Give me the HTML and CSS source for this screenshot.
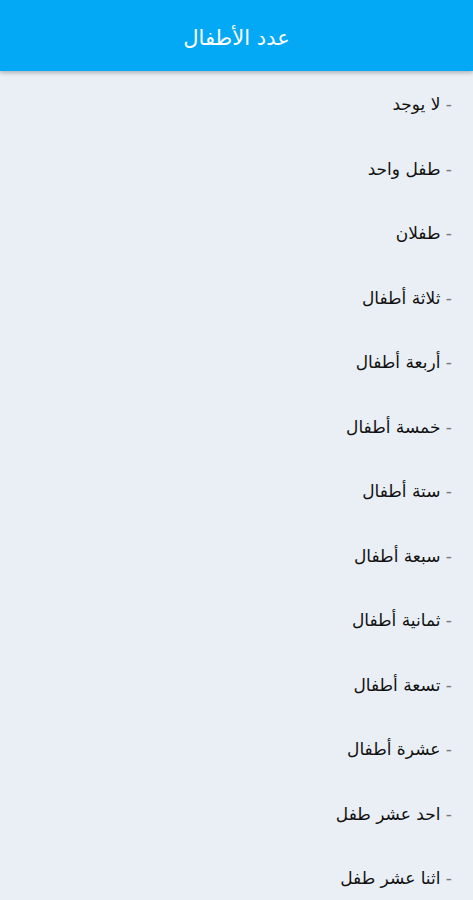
FILE: index.html
```html
<!DOCTYPE html>
<html lang="ar" dir="rtl">
<head>
<meta charset="utf-8">
<link rel="stylesheet" href="styles.css">
</head>
<body>
<header class="appbar"><h1 class="title">عدد الأطفال</h1></header>
<ul class="list">
<li class="item"><span class="dash">-</span> لا يوجد</li>
<li class="item"><span class="dash">-</span> طفل واحد</li>
<li class="item"><span class="dash">-</span> طفلان</li>
<li class="item"><span class="dash">-</span> ثلاثة أطفال</li>
<li class="item"><span class="dash">-</span> أربعة أطفال</li>
<li class="item"><span class="dash">-</span> خمسة أطفال</li>
<li class="item"><span class="dash">-</span> ستة أطفال</li>
<li class="item"><span class="dash">-</span> سبعة أطفال</li>
<li class="item"><span class="dash">-</span> ثمانية أطفال</li>
<li class="item"><span class="dash">-</span> تسعة أطفال</li>
<li class="item"><span class="dash">-</span> عشرة أطفال</li>
<li class="item"><span class="dash">-</span> احد عشر طفل</li>
<li class="item"><span class="dash">-</span> اثنا عشر طفل</li>
</ul>
</body>
</html>
```
FILE: styles.css
```css
html, body {
  margin: 0;
  padding: 0;
}
body {
  background: #e9eff5;
  font-family: "DejaVu Sans", "Noto Sans", sans-serif;
  height: 900px;
  overflow: hidden;
}
.appbar {
  height: 71px;
  background: #03a9f4;
  display: flex;
  align-items: center;
  justify-content: center;
  box-shadow: 0 2px 4px rgba(0,0,0,0.25);
  position: relative;
  z-index: 1;
}
.title {
  margin: 0;
  padding-top: 4px;
  color: #fff;
  font-size: 21px;
  font-weight: normal;
}
.list {
  list-style: none;
  margin: 0;
  padding: 21px 21px 0 0;
  display: flex;
  flex-direction: column;
}
.item {
  height: 64.5px;
  line-height: 24px;
  font-size: 17px;
  color: #111;
}
.dash {
  color: #777;
}
```
